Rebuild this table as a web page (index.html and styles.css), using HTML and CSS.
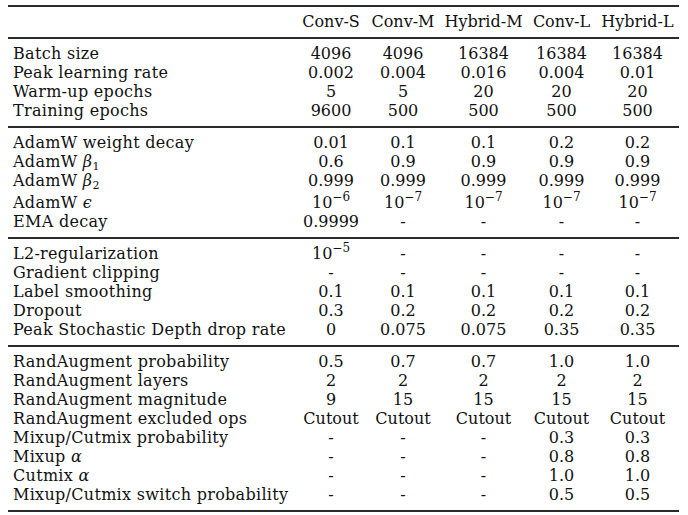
FILE: index.html
```html
<!DOCTYPE html>
<html>
<head>
<meta charset="utf-8">
<link rel="stylesheet" href="styles.css">
</head>
<body>
<table class="hp">
  <colgroup>
    <col class="c-label">
    <col class="c-convs">
    <col class="c-convm">
    <col class="c-hybm">
    <col class="c-convl">
    <col class="c-hybl">
  </colgroup>
  <thead>
    <tr><th class="lab"></th><th>Conv-S</th><th>Conv-M</th><th>Hybrid-M</th><th>Conv-L</th><th>Hybrid-L</th></tr>
  </thead>
  <tbody>
    <tr><td class="lab">Batch size</td><td>4096</td><td>4096</td><td>16384</td><td>16384</td><td>16384</td></tr>
    <tr><td class="lab">Peak learning rate</td><td>0.002</td><td>0.004</td><td>0.016</td><td>0.004</td><td>0.01</td></tr>
    <tr><td class="lab">Warm-up epochs</td><td>5</td><td>5</td><td>20</td><td>20</td><td>20</td></tr>
    <tr><td class="lab">Training epochs</td><td>9600</td><td>500</td><td>500</td><td>500</td><td>500</td></tr>
  </tbody>
  <tbody>
    <tr><td class="lab">AdamW weight decay</td><td>0.01</td><td>0.1</td><td>0.1</td><td>0.2</td><td>0.2</td></tr>
    <tr><td class="lab">AdamW <i class="m">β</i><sub>1</sub></td><td>0.6</td><td>0.9</td><td>0.9</td><td>0.9</td><td>0.9</td></tr>
    <tr><td class="lab">AdamW <i class="m">β</i><sub>2</sub></td><td>0.999</td><td>0.999</td><td>0.999</td><td>0.999</td><td>0.999</td></tr>
    <tr class="tall"><td class="lab">AdamW <i class="m">ϵ</i></td><td>10<sup>−6</sup></td><td>10<sup>−7</sup></td><td>10<sup>−7</sup></td><td>10<sup>−7</sup></td><td>10<sup>−7</sup></td></tr>
    <tr><td class="lab">EMA decay</td><td>0.9999</td><td>-</td><td>-</td><td>-</td><td>-</td></tr>
  </tbody>
  <tbody>
    <tr><td class="lab">L2-regularization</td><td>10<sup>−5</sup></td><td>-</td><td>-</td><td>-</td><td>-</td></tr>
    <tr><td class="lab">Gradient clipping</td><td>-</td><td>-</td><td>-</td><td>-</td><td>-</td></tr>
    <tr><td class="lab">Label smoothing</td><td>0.1</td><td>0.1</td><td>0.1</td><td>0.1</td><td>0.1</td></tr>
    <tr><td class="lab">Dropout</td><td>0.3</td><td>0.2</td><td>0.2</td><td>0.2</td><td>0.2</td></tr>
    <tr><td class="lab">Peak Stochastic Depth drop rate</td><td>0</td><td>0.075</td><td>0.075</td><td>0.35</td><td>0.35</td></tr>
  </tbody>
  <tbody>
    <tr><td class="lab">RandAugment probability</td><td>0.5</td><td>0.7</td><td>0.7</td><td>1.0</td><td>1.0</td></tr>
    <tr><td class="lab">RandAugment layers</td><td>2</td><td>2</td><td>2</td><td>2</td><td>2</td></tr>
    <tr><td class="lab">RandAugment magnitude</td><td>9</td><td>15</td><td>15</td><td>15</td><td>15</td></tr>
    <tr><td class="lab">RandAugment excluded ops</td><td>Cutout</td><td>Cutout</td><td>Cutout</td><td>Cutout</td><td>Cutout</td></tr>
    <tr><td class="lab">Mixup/Cutmix probability</td><td>-</td><td>-</td><td>-</td><td>0.3</td><td>0.3</td></tr>
    <tr><td class="lab">Mixup <i class="m">α</i></td><td>-</td><td>-</td><td>-</td><td>0.8</td><td>0.8</td></tr>
    <tr><td class="lab">Cutmix <i class="m">α</i></td><td>-</td><td>-</td><td>-</td><td>1.0</td><td>1.0</td></tr>
    <tr><td class="lab">Mixup/Cutmix switch probability</td><td>-</td><td>-</td><td>-</td><td>0.5</td><td>0.5</td></tr>
  </tbody>
</table>
</body>
</html>
```

FILE: styles.css
```css
html, body {
  margin: 0;
  padding: 0;
  background: #ffffff;
}

body {
  font-family: "DejaVu Serif", "Liberation Serif", serif;
  font-size: 16px;
  color: #111111;
}

.hp {
  margin: 5px 0 0 8px;
  width: 671px;
  table-layout: fixed;
  border-collapse: collapse;
  border-top: 2px solid #2a2a2a;
  border-bottom: 2px solid #2a2a2a;
}

.c-label { width: 288px; }
.c-convs { width: 70px; }
.c-convm { width: 74px; }
.c-hybm { width: 87px; }
.c-convl { width: 69px; }
.c-hybl { width: 83px; }

.hp th,
.hp td {
  padding: 0;
  line-height: 19px;
  height: 19px;
  text-align: center;
  font-weight: normal;
  white-space: nowrap;
  vertical-align: baseline;
}

.hp th {
  padding-top: 5px;
  padding-bottom: 6px;
}

.hp .lab {
  text-align: left;
  padding-left: 5px;
  letter-spacing: 0.3px;
}

.hp tbody {
  border-top: 2px solid #2a2a2a;
}

.hp tbody tr:first-child td {
  padding-top: 5px;
}

.hp tbody tr:last-child td {
  padding-bottom: 6px;
}

.hp tr.tall td {
  padding-top: 3px;
}

.m {
  font-style: italic;
}

sub {
  font-size: 11px;
  line-height: 0;
  vertical-align: -3px;
}

sup {
  font-size: 12px;
  line-height: 0;
  vertical-align: 7px;
}
```
